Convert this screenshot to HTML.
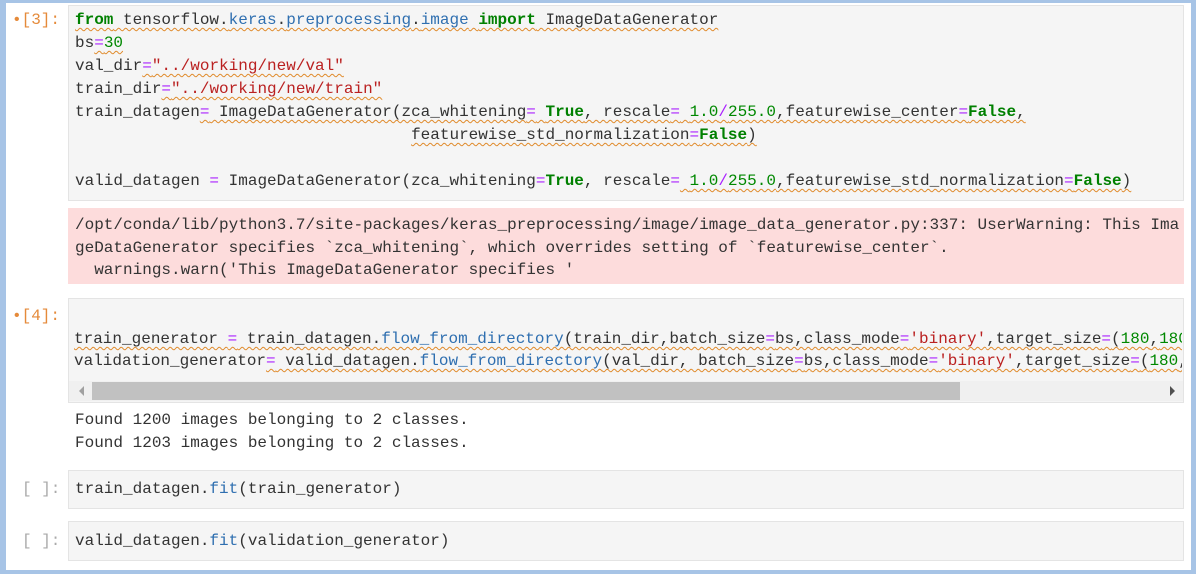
<!DOCTYPE html>
<html><head><style>
body{margin:0;width:1196px;height:574px;background:#fff;position:relative;overflow:hidden;font-family:"Liberation Mono",monospace;font-size:16px;}
.frame{position:absolute;left:0;top:0;width:1196px;height:574px;box-sizing:border-box;border-left:6px solid #a7c4e6;border-right:5px solid #a7c4e6;border-top:3px solid #a7c4e6;border-bottom:4px solid #a7c4e6;}
.box{position:absolute;left:68px;width:1116px;background:#f5f5f5;border:1px solid #e4e4e4;box-sizing:border-box;}
.err{position:absolute;left:68px;width:1116px;background:#fddcdc;}
.l{position:absolute;left:75px;white-space:pre;color:#333;line-height:23px;height:23px;}
.p{position:absolute;white-space:pre;line-height:23px;color:#e58a3a;}
.g{position:absolute;white-space:pre;line-height:23px;color:#aaa;}
.u{text-decoration:underline wavy #e08a2a;text-decoration-thickness:1px;text-underline-offset:3px;}
.k{color:#008000;font-weight:bold}
.b{color:#2f6fb0}
.n{color:#080}
.s{color:#ba2121}
.o{color:#aa22ff}
</style></head><body>
<div class="frame"></div>
<div class="box" style="top:5px;height:196px"></div>
<div class="p" style="left:12px;top:9px">•[3]:</div>
<div class="l" style="top:9px"><span class="u"><span class="k">from</span> tensorflow.<span class="b">keras</span>.<span class="b">preprocessing</span>.<span class="b">image</span> <span class="k">import</span> ImageDataGenerator</span></div>
<div class="l" style="top:32px">bs<span class="u"><span class="o">=</span><span class="n">30</span></span></div>
<div class="l" style="top:55px">val_dir<span class="u"><span class="o">=</span><span class="s">"../working/new/val"</span></span></div>
<div class="l" style="top:78px">train_dir<span class="u"><span class="o">=</span><span class="s">"../working/new/train"</span></span></div>
<div class="l" style="top:101px">train_datagen<span class="u"><span class="o">=</span> ImageDataGenerator(zca_whitening<span class="o">=</span> <span class="k">True</span>, rescale<span class="o">=</span> <span class="n">1.0</span><span class="o">/</span><span class="n">255.0</span>,featurewise_center<span class="o">=</span><span class="k">False</span>,</span></div>
<div class="l" style="top:124px">                                   <span class="u">featurewise_std_normalization<span class="o">=</span><span class="k">False</span>)</span></div>
<div class="l" style="top:170px">valid_datagen <span class="o">=</span> ImageDataGenerator(zca_whitening<span class="o">=</span><span class="k">True</span>, rescale<span class="o">=</span><span class="u"> <span class="n">1.0</span><span class="o">/</span><span class="n">255.0</span>,featurewise_std_normalization<span class="o">=</span><span class="k">False</span>)</span></div>
<div class="err" style="top:208px;height:76px"></div>
<div class="l" style="top:214px">/opt/conda/lib/python3.7/site-packages/keras_preprocessing/image/image_data_generator.py:337: UserWarning: This Ima</div>
<div class="l" style="top:237px">geDataGenerator specifies `zca_whitening`, which overrides setting of `featurewise_center`.</div>
<div class="l" style="top:259px">  warnings.warn('This ImageDataGenerator specifies '</div>
<div class="box" style="top:298px;height:105px;overflow:hidden"></div>
<div class="p" style="left:12px;top:305px">•[4]:</div>
<div class="l" style="top:328px;left:74px;width:1108px;overflow:hidden"><span class="u">train_generator <span class="o">=</span> train_datagen.<span class="b">flow_from_directory</span>(train_dir,batch_size<span class="o">=</span>bs,class_mode<span class="o">=</span><span class="s">'binary'</span>,target_size<span class="o">=</span>(<span class="n">180</span>,<span class="n">180</span></span></div>
<div class="l" style="top:350px;left:74px;width:1108px;overflow:hidden">validation_generator<span class="u"><span class="o">=</span> valid_datagen.<span class="b">flow_from_directory</span>(val_dir, batch_size<span class="o">=</span>bs,class_mode<span class="o">=</span><span class="s">'binary'</span>,target_size<span class="o">=</span>(<span class="n">180</span>,</span></div>
<div style="position:absolute;left:69px;top:381px;width:1114px;height:20px;background:#f0f0f0"></div>
<div style="position:absolute;left:92px;top:382px;width:868px;height:18px;background:#c1c1c1"></div>
<div style="position:absolute;left:79px;top:386px;width:0;height:0;border-top:5px solid transparent;border-bottom:5px solid transparent;border-right:5px solid #a0a0a0"></div>
<div style="position:absolute;left:1170px;top:386px;width:0;height:0;border-top:5px solid transparent;border-bottom:5px solid transparent;border-left:5px solid #505050"></div>
<div class="l" style="top:409px">Found 1200 images belonging to 2 classes.</div>
<div class="l" style="top:432px">Found 1203 images belonging to 2 classes.</div>
<div class="box" style="top:470px;height:39px"></div>
<div class="g" style="left:22px;top:478px">[ ]:</div>
<div class="l" style="top:478px">train_datagen.<span class="b">fit</span>(train_generator)</div>
<div class="box" style="top:521px;height:40px"></div>
<div class="g" style="left:22px;top:530px">[ ]:</div>
<div class="l" style="top:530px">valid_datagen.<span class="b">fit</span>(validation_generator)</div>
</body></html>
